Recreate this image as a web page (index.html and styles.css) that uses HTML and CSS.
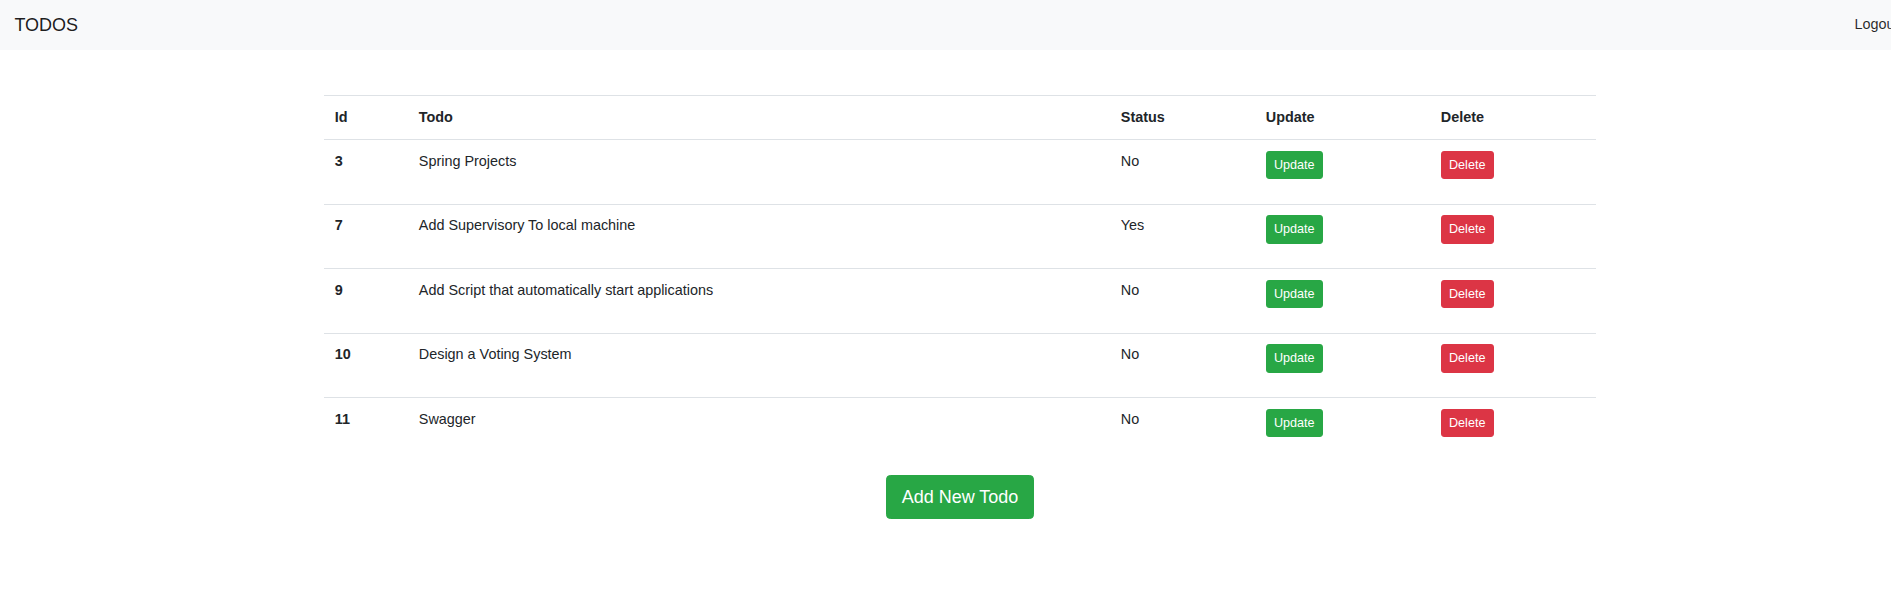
FILE: index.html
```html
<!DOCTYPE html>
<html lang="en">
<head>
<meta charset="utf-8">
<title>Todos</title>
<link rel="stylesheet" href="styles.css">
</head>
<body>
<div class="page">
  <nav class="navbar">
    <a class="brand" href="#">TODOS</a>
    <ul class="nav">
      <li><a class="nav-link" href="#">Logout</a></li>
    </ul>
  </nav>
  <main class="container">
    <table class="table">
      <colgroup>
        <col class="c-id"><col class="c-todo"><col class="c-status"><col class="c-update"><col class="c-delete">
      </colgroup>
      <thead>
        <tr><th>Id</th><th>Todo</th><th>Status</th><th>Update</th><th>Delete</th></tr>
      </thead>
      <tbody>
        <tr>
          <th class="row-id">3</th><td>Spring Projects</td><td>No</td>
          <td><form class="cell-form"><button type="button" class="btn btn-sm btn-success">Update</button></form></td>
          <td><form class="cell-form"><button type="button" class="btn btn-sm btn-danger">Delete</button></form></td>
        </tr>
        <tr>
          <th class="row-id">7</th><td>Add Supervisory To local machine</td><td>Yes</td>
          <td><form class="cell-form"><button type="button" class="btn btn-sm btn-success">Update</button></form></td>
          <td><form class="cell-form"><button type="button" class="btn btn-sm btn-danger">Delete</button></form></td>
        </tr>
        <tr>
          <th class="row-id">9</th><td>Add Script that automatically start applications</td><td>No</td>
          <td><form class="cell-form"><button type="button" class="btn btn-sm btn-success">Update</button></form></td>
          <td><form class="cell-form"><button type="button" class="btn btn-sm btn-danger">Delete</button></form></td>
        </tr>
        <tr>
          <th class="row-id">10</th><td>Design a Voting System</td><td>No</td>
          <td><form class="cell-form"><button type="button" class="btn btn-sm btn-success">Update</button></form></td>
          <td><form class="cell-form"><button type="button" class="btn btn-sm btn-danger">Delete</button></form></td>
        </tr>
        <tr>
          <th class="row-id">11</th><td>Swagger</td><td>No</td>
          <td><form class="cell-form"><button type="button" class="btn btn-sm btn-success">Update</button></form></td>
          <td><form class="cell-form"><button type="button" class="btn btn-sm btn-danger">Delete</button></form></td>
        </tr>
      </tbody>
    </table>
    <div class="actions">
      <button type="button" class="btn btn-lg btn-success">Add New Todo</button>
    </div>
  </main>
</div>
</body>
</html>
```

FILE: styles.css
```css
* { box-sizing: border-box; }

html, body {
  margin: 0;
  padding: 0;
  overflow: hidden;
}

body {
  font-family: "Liberation Sans", Arial, Helvetica, sans-serif;
  font-size: 14.4px;
  line-height: 1.5;
  color: #212529;
  background: #fff;
}

.page {
  width: 1920px;
}

.navbar {
  display: flex;
  align-items: center;
  justify-content: space-between;
  background: #f8f9fa;
  padding: 7.2px 14.4px;
  height: 50.4px;
}

.brand {
  font-size: 18px;
  line-height: 27px;
  padding: 4.5px 0;
  color: rgba(0, 0, 0, 0.9);
  text-decoration: none;
}

.nav {
  display: flex;
  list-style: none;
  margin: 0;
  padding: 0;
}

.nav-link {
  display: block;
  padding: 7.2px;
  color: rgba(0, 0, 0, 0.85);
  text-decoration: none;
}

.container {
  width: 1272px;
  margin: 44.6px auto 0;
}

.table {
  width: 100%;
  table-layout: fixed;
  border-collapse: collapse;
  margin-bottom: 13.8px;
}

.c-id { width: 84px; }
.c-todo { width: 702px; }
.c-status { width: 145px; }
.c-update { width: 175px; }
.c-delete { width: 166px; }

.table th,
.table td {
  padding: 10.8px;
  text-align: left;
  vertical-align: top;
  border-top: 1px solid #dee2e6;
}

.table thead th {
  font-weight: bold;
  border-bottom: 1px solid #dee2e6;
}

.table .row-id {
  font-weight: bold;
}

.cell-form {
  display: flex;
  margin: 0 0 13.8px;
}

.btn {
  display: inline-block;
  font-family: inherit;
  font-weight: 400;
  color: #fff;
  text-align: center;
  border: 0.9px solid transparent;
  cursor: pointer;
}

.btn-sm {
  font-size: 12.6px;
  line-height: 18.9px;
  padding: 3.6px 7.2px;
  border-radius: 2.9px;
}

.btn-lg {
  font-size: 18px;
  line-height: 27px;
  padding: 7.2px 14.4px;
  border-radius: 4.3px;
}

.btn-success {
  background: #28a745;
  border-color: #28a745;
}

.btn-danger {
  background: #dc3545;
  border-color: #dc3545;
}

.actions {
  display: flex;
  justify-content: center;
}
```
